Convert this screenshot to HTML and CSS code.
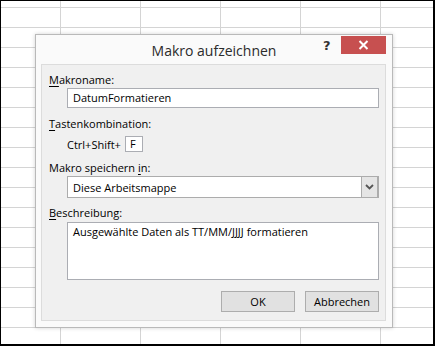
FILE: index.html
```html
<!DOCTYPE html>
<html lang="de">
<head>
    <meta charset="UTF-8">
    <title>Makro aufzeichnen</title>
    <link rel="stylesheet" href="styles.css">
</head>
<body>
    <div class="sheet">
        <div class="dialog">
            <div class="titlebar">
                <span class="title">Makro aufzeichnen</span>
                <span class="help">?</span>
                <span class="close">
                    <svg width="11" height="10" viewBox="0 0 11 10">
                        <path d="M1.5 1 L9.5 9 M9.5 1 L1.5 9" stroke="#fff" stroke-width="2"/>
                    </svg>
                </span>
            </div>

            <div class="panel">
                <div class="label"><u>M</u>akroname:</div>
                <div class="field input">DatumFormatieren</div>

                <div class="label gap"><u>T</u>astenkombination:</div>
                <div class="field shortcut">
                    <span>Ctrl+Shift+</span>
                    <span class="keybox">F</span>
                </div>

                <div class="label gap">Makro speichern <u>i</u>n:</div>
                <div class="field select">
                    <span class="select-text">Diese Arbeitsmappe</span>
                    <span class="drop">
                        <svg width="9" height="6" viewBox="0 0 9 6">
                            <path d="M1 1 L4.5 4.5 L8 1" fill="none" stroke="#555" stroke-width="1.8"/>
                        </svg>
                    </span>
                </div>

                <div class="label gap-small"><u>B</u>eschreibung:</div>
                <div class="field textarea">Ausgewählte Daten als TT/MM/JJJJ formatieren</div>

                <div class="buttons">
                    <div class="btn">OK</div>
                    <div class="btn">Abbrechen</div>
                </div>
            </div>
        </div>
    </div>
</body>
</html>
```

FILE: styles.css
```css
body {
    margin: 0;
    background: #000;
}

.sheet {
    position: relative;
    width: 435px;
    height: 346px;
    box-sizing: border-box;
    border-style: solid;
    border-color: #000;
    border-width: 1px 2px 2px 1px;
    background-color: #fff;
    background-image:
        linear-gradient(#d4d4d4 1px, transparent 1px),
        linear-gradient(90deg, #d4d4d4 1px, transparent 1px);
    background-size: 100% 20px, 80px 100%;
    background-position: 0 6px, 59px 0;
    font-family: "Open Sans", "Noto Sans", Arial, sans-serif;
    font-size: 11px;
    color: #000;
}

.dialog {
    position: absolute;
    left: 34px;
    top: 33px;
    width: 358px;
    height: 294px;
    box-sizing: border-box;
    border: 1px solid #b9b9b9;
    background: #fafafa;
    box-shadow: 0 0 4px rgba(0, 0, 0, 0.18);
    display: flex;
    flex-direction: column;
}

.titlebar {
    height: 29px;
    position: relative;
    display: flex;
    justify-content: center;
    align-items: center;
}

.title {
    font-size: 14px;
    color: #2b2b2b;
    margin-top: 2px;
}

.help {
    position: absolute;
    left: 287px;
    top: 3px;
    font-family: "DejaVu Sans", sans-serif;
    font-weight: bold;
    font-size: 13px;
    color: #333;
}

.close {
    position: absolute;
    left: 305px;
    top: 1px;
    width: 45px;
    height: 18px;
    background: #c75050;
    display: flex;
    align-items: center;
    justify-content: center;
}

.panel {
    margin: 0 6px 6px 5px;
    flex: 1;
    border: 1px solid #dcdcdc;
    background: #f0f0f0;
    padding: 7px 6px 0 7px;
}

.label {
    height: 15px;
    line-height: 15px;
    white-space: nowrap;
}

.label u {
    text-decoration-thickness: 1px;
    text-underline-offset: 2px;
}

.gap {
    margin-top: 8px;
}

.gap-small {
    margin-top: 7px;
}

.field {
    margin-left: 18px;
    box-sizing: border-box;
}

.input {
    margin-top: 1px;
    height: 20px;
    border: 1px solid #abadb3;
    background: #fff;
    padding: 0 5px;
    line-height: 18px;
}

.shortcut {
    margin-top: 5px;
    height: 16px;
    display: flex;
    align-items: center;
    gap: 4px;
}

.keybox {
    width: 18px;
    height: 16px;
    box-sizing: border-box;
    border: 1px solid #abadb3;
    background: #fff;
    padding-left: 4px;
    line-height: 14px;
}

.select {
    margin-top: 1px;
    height: 22px;
    border: 1px solid #acacac;
    background: #fff;
    display: flex;
    align-items: center;
}

.select-text {
    flex: 1;
    padding-left: 5px;
}

.drop {
    width: 17px;
    height: 20px;
    box-sizing: border-box;
    border-left: 1px solid #acacac;
    border-right: 1px solid #acacac;
    background: #e5e5e5;
    display: flex;
    align-items: center;
    justify-content: center;
}

.textarea {
    margin-top: 2px;
    height: 58px;
    border: 1px solid #abadb3;
    background: #fff;
    padding: 1px 5px;
    line-height: 15px;
}

.buttons {
    margin-top: 11px;
    display: flex;
    justify-content: flex-end;
    gap: 10px;
}

.btn {
    width: 74px;
    height: 21px;
    box-sizing: border-box;
    border: 1px solid #adadad;
    background: #e1e1e1;
    text-align: center;
    line-height: 19px;
}
```
